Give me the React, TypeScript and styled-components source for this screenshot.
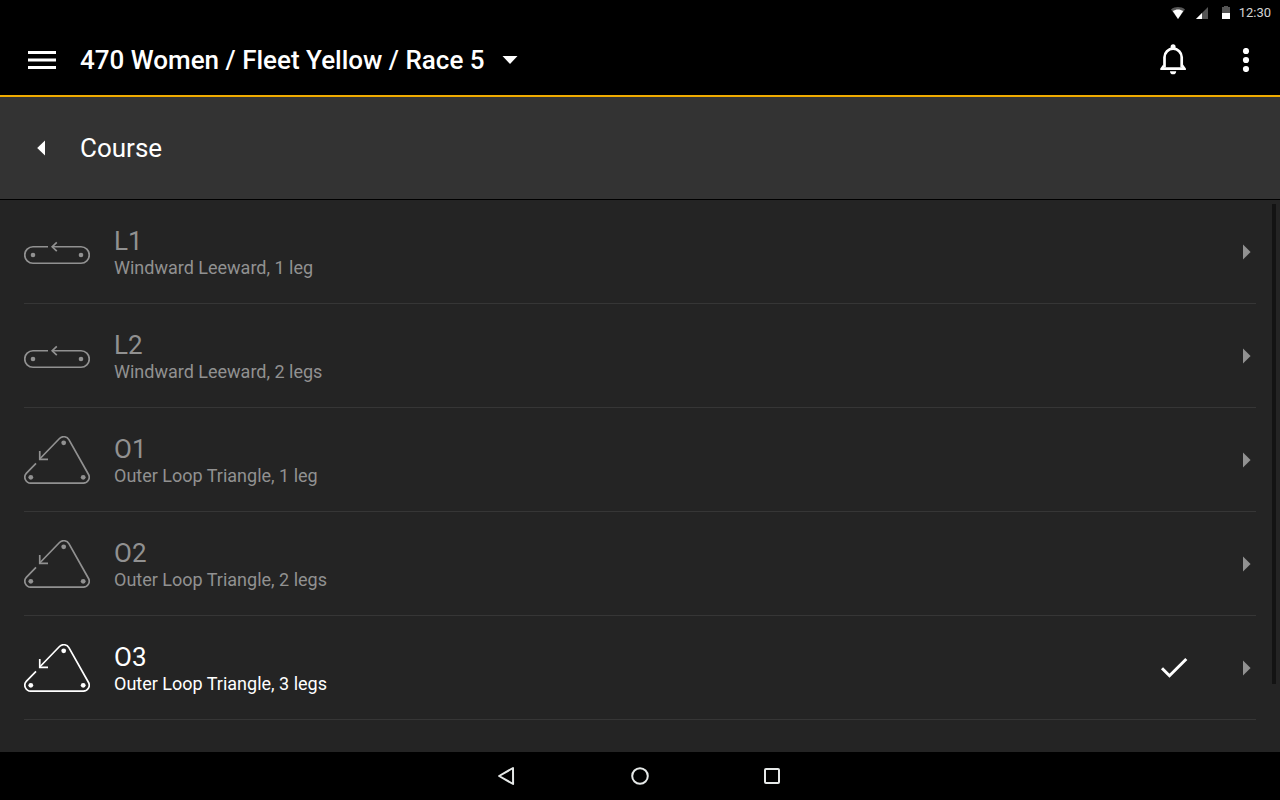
import React from "react";
import styled, { createGlobalStyle } from "styled-components";

const GlobalStyle = createGlobalStyle`
  *, *::before, *::after { box-sizing: border-box; }
  body { margin: 0; background: #000; font-family: Roboto, "Liberation Sans", sans-serif; }
`;

const Screen = styled.div`
  display: flex;
  flex-direction: column;
  height: 100vh;
  overflow: hidden;
  color: #fff;
  background: #000;
`;

const StatusBar = styled.div`
  display: flex;
  flex: none;
  align-items: center;
  justify-content: flex-end;
  height: 24px;
  padding: 1px 9px 0 0;
  color: #d4d4d4;
  font-size: 13px;
  line-height: 16px;
`;

const StatusIcons = styled.div`
  display: flex;
  align-items: center;
  gap: 10px;
  margin-right: 5px;
`;

const Glyph = styled.svg`
  display: block;
  flex: none;
`;

const AppBar = styled.header`
  display: flex;
  flex: none;
  align-items: center;
  justify-content: space-between;
  height: 73px;
  padding: 0 28px;
  border-bottom: 2px solid #f0ab00;
`;

const BarGroup = styled.div<{ $gap: number }>`
  display: flex;
  align-items: center;
  gap: ${(p) => p.$gap}px;
`;

const PlainButton = styled.button`
  display: flex;
  align-items: center;
  padding: 0;
  border: 0;
  background: none;
  color: inherit;
  font: inherit;
  cursor: pointer;
`;

const TitleButton = styled(PlainButton)`
  gap: 17px;
`;

const Title = styled.span`
  font-size: 26px;
  font-weight: 500;
  line-height: 32px;
  white-space: nowrap;
`;

const SectionHeader = styled.div`
  display: flex;
  flex: none;
  align-items: center;
  gap: 24px;
  height: 103px;
  padding: 0 28px;
  background: #333;
  border-bottom: 1px solid #000;
`;

const BackButton = styled(PlainButton)`
  justify-content: center;
  width: 28px;
  height: 28px;
`;

const SectionTitle = styled.h1`
  margin: 0;
  font-size: 26px;
  font-weight: 400;
  line-height: 32px;
`;

const ListPanel = styled.main`
  position: relative;
  flex: 1;
  min-height: 0;
  overflow: hidden;
  background: #242424;
`;

const CourseList = styled.ul`
  margin: 0;
  padding: 0 24px;
  list-style: none;
`;

const CourseItem = styled.li`
  border-bottom: 1px solid #363636;
`;

const CourseButton = styled(PlainButton)<{ $selected: boolean }>`
  gap: 24px;
  width: 100%;
  height: 103px;
  padding-top: 1px;
  text-align: left;
  color: ${(p) => (p.$selected ? "#fff" : "#919191")};
`;

const CourseText = styled.span`
  display: flex;
  flex: 1;
  flex-direction: column;
`;

const CourseName = styled.span`
  font-size: 26px;
  line-height: 32px;
`;

const CourseDetail = styled.span`
  font-size: 18px;
  line-height: 22px;
`;

const RowEnd = styled.span`
  display: flex;
  align-items: center;
  gap: 55px;
  padding-right: 5px;
`;

const ScrollThumb = styled.div`
  position: absolute;
  top: 4px;
  right: 4px;
  width: 4px;
  height: 87%;
  background: #131313;
`;

const NavBar = styled.nav`
  display: flex;
  flex: none;
  align-items: center;
  justify-content: center;
  gap: 108px;
  height: 48px;
`;

const NavButton = styled(PlainButton)`
  justify-content: center;
  width: 24px;
  height: 24px;
`;

type Shape = "line" | "triangle";

const courses: { name: string; detail: string; shape: Shape; selected: boolean }[] = [
  { name: "L1", detail: "Windward Leeward, 1 leg", shape: "line", selected: false },
  { name: "L2", detail: "Windward Leeward, 2 legs", shape: "line", selected: false },
  { name: "O1", detail: "Outer Loop Triangle, 1 leg", shape: "triangle", selected: false },
  { name: "O2", detail: "Outer Loop Triangle, 2 legs", shape: "triangle", selected: false },
  { name: "O3", detail: "Outer Loop Triangle, 3 legs", shape: "triangle", selected: true },
];

function CourseShape({ shape }: { shape: Shape }) {
  return (
    <Glyph width="66" height="48" viewBox="0 0 66 48" fill="none" stroke="currentColor" strokeWidth="1.7" aria-hidden="true">
      {shape === "line" ? (
        <>
          <path d="M24 18.75H9a8.25 8.25 0 0 0 0 16.5h48a8.25 8.25 0 0 0 0-16.5H28" />
          <path d="M32.8 14.4 28.2 18.75l4.6 4.4" />
          <g fill="currentColor" stroke="none">
            <circle cx="9" cy="27" r="2.3" />
            <circle cx="57" cy="27" r="2.3" />
          </g>
        </>
      ) : (
        <>
          <path d="M12 27.3 2.5 37.1A5.95 5.95 0 0 0 6.7 47.15H59.3A5.95 5.95 0 0 0 64.4 38.2L44.9 3.7A5.95 5.95 0 0 0 35.5 2.5L15.7 23" />
          <path d="M15.75 15v8.3H24" />
          <g fill="currentColor" stroke="none">
            <circle cx="39.7" cy="6.8" r="2.4" />
            <circle cx="6.8" cy="41.3" r="2.4" />
            <circle cx="59.2" cy="41.3" r="2.4" />
          </g>
        </>
      )}
    </Glyph>
  );
}

export default function App() {
  return (
    <Screen>
      <GlobalStyle />
      <StatusBar>
        <StatusIcons>
          <Glyph width="16" height="14" viewBox="0 0 16 14" aria-hidden="true">
            <path d="M1 3.5C5 .3 11 .3 15 3.5L8 13z" fill="#555" />
            <path d="M2.8 5C6 2.9 10 2.9 13.2 5L8 13z" fill="#fff" />
          </Glyph>
          <Glyph width="12" height="14" viewBox="0 0 12 14" aria-hidden="true">
            <path d="M12 1v12H0z" fill="#555" />
            <path d="M6 7v6H0z" fill="#fff" />
          </Glyph>
          <Glyph width="16" height="14" viewBox="0 0 16 14" aria-hidden="true">
            <path d="M4 1h2V0h4v1h2v6H4z" fill="#555" />
            <path d="M4 7h8v6H4z" fill="#fff" />
          </Glyph>
        </StatusIcons>
        <time>12:30</time>
      </StatusBar>

      <AppBar>
        <BarGroup $gap={24}>
          <PlainButton aria-label="Menu">
            <Glyph width="28" height="18" viewBox="0 0 28 18" fill="#fff" aria-hidden="true">
              <path d="M0 0h28v3H0zM0 7.5h28v3H0zM0 15h28v3H0z" />
            </Glyph>
          </PlainButton>
          <TitleButton aria-haspopup="listbox">
            <Title>470 Women / Fleet Yellow / Race 5</Title>
            <Glyph width="16" height="8" viewBox="0 0 16 8" fill="#fff" aria-hidden="true">
              <path d="M.5 0h15L8 8z" />
            </Glyph>
          </TitleButton>
        </BarGroup>
        <BarGroup $gap={51}>
          <PlainButton aria-label="Notifications">
            <Glyph width="32" height="32" viewBox="0 0 32 32" fill="none" aria-hidden="true">
              <path d="M7.5 23.5V13.3a8.6 8.6 0 0 1 17.2 0v10.2" stroke="#fff" strokeWidth="2.7" />
              <path d="M13.6 5V2.8a2.5 2.5 0 0 1 5 0V5zM6.2 20.5 3.3 24.4V26h25.6v-1.6l-2.9-3.9-1 2.7H7.2zM13 27.2h6.2a3.1 3.1 0 0 1-6.2 0z" fill="#fff" />
            </Glyph>
          </PlainButton>
          <PlainButton aria-label="More options">
            <Glyph width="12" height="24" viewBox="0 0 12 24" fill="#fff" aria-hidden="true">
              <circle cx="6" cy="3" r="3.1" />
              <circle cx="6" cy="12" r="3.1" />
              <circle cx="6" cy="21" r="3.1" />
            </Glyph>
          </PlainButton>
        </BarGroup>
      </AppBar>

      <SectionHeader>
        <BackButton aria-label="Back">
          <Glyph width="10" height="16" viewBox="0 0 10 16" fill="#fff" aria-hidden="true">
            <path d="M8 .5v15L.2 8z" />
          </Glyph>
        </BackButton>
        <SectionTitle>Course</SectionTitle>
      </SectionHeader>

      <ListPanel>
        <CourseList>
          {courses.map((course) => (
            <CourseItem key={course.name}>
              <CourseButton $selected={course.selected} aria-pressed={course.selected}>
                <CourseShape shape={course.shape} />
                <CourseText>
                  <CourseName>{course.name}</CourseName>
                  <CourseDetail>{course.detail}</CourseDetail>
                </CourseText>
                <RowEnd>
                  {course.selected && (
                    <Glyph width="28" height="22" viewBox="0 0 28 22" fill="none" stroke="#fff" strokeWidth="3" aria-hidden="true">
                      <path d="M2 11.2 9.5 18.7 26.3 2" />
                    </Glyph>
                  )}
                  <Glyph width="8" height="16" viewBox="0 0 8 16" fill="#919191" aria-hidden="true">
                    <path d="M0 .5v15L7.6 8z" />
                  </Glyph>
                </RowEnd>
              </CourseButton>
            </CourseItem>
          ))}
        </CourseList>
        <ScrollThumb />
      </ListPanel>

      <NavBar aria-label="System">
        <NavButton aria-label="Back">
          <Glyph width="24" height="24" viewBox="0 0 24 24" fill="none" stroke="#e6e9e8" strokeWidth="2" strokeLinejoin="round" aria-hidden="true">
            <path d="M18.9 3.6 19 19.6 5 11.6z" transform="translate(-1.9 .4)" />
          </Glyph>
        </NavButton>
        <NavButton aria-label="Home">
          <Glyph width="24" height="24" viewBox="0 0 24 24" fill="none" stroke="#e6e9e8" strokeWidth="2" aria-hidden="true">
            <circle cx="12" cy="12" r="7.8" />
          </Glyph>
        </NavButton>
        <NavButton aria-label="Recent apps">
          <Glyph width="24" height="24" viewBox="0 0 24 24" fill="none" stroke="#e6e9e8" strokeWidth="2" aria-hidden="true">
            <rect x="5" y="5" width="14" height="14" rx="1" />
          </Glyph>
        </NavButton>
      </NavBar>
    </Screen>
  );
}
